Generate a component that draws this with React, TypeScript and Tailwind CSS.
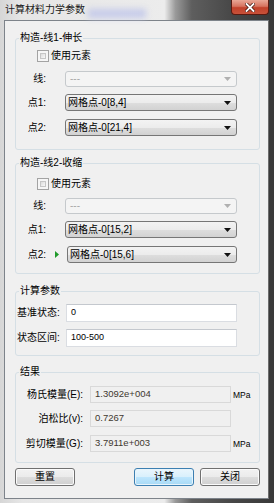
import React from 'react';

const font = "[font-family:'Liberation_Sans','Noto_Sans_CJK_SC',sans-serif]";

const Arrow = ({ disabled }: { disabled?: boolean }) => (
    <svg width="7" height="4" viewBox="0 0 7 4" className="shrink-0">
        <path d="M0 0H7L3.5 4Z" fill={disabled ? '#b0b0b0' : '#111'} />
    </svg>
);

const Combo = ({ value, disabled, width }: { value: string; disabled?: boolean; width: string }) => {
    if (disabled) {
        return (
            <div className={`${width} h-[16px] flex items-center pl-[4px] pr-[5px] rounded-[3px] border border-[#c5c9cc] bg-[#f4f4f4] text-[#a8a8a8]`}>
                <span className="flex-1 leading-[12px]">---</span>
                <Arrow disabled />
            </div>
        );
    }
    return (
        <div className={`${width} h-[17px] flex items-center pl-[2px] pr-[5px] rounded-[3px] border border-[#767676] bg-[linear-gradient(180deg,#f3f3f3_0%,#ececec_50%,#dedede_51%,#d2d2d2_100%)] text-black`}>
            <span className="flex-1 leading-[12px] whitespace-nowrap">{value}</span>
            <Arrow />
        </div>
    );
};

const CheckRow = () => (
    <div className="flex items-center h-[13px] pl-[21px]">
        <div className="w-[12px] h-[12px] border border-[#a3a3a3] bg-[#f6f6f6] p-[2px]">
            <div className="w-full h-full border border-[#c6c6c6] bg-[linear-gradient(135deg,#dcdcdc_0%,#f8f8f8_100%)]" />
        </div>
        <span className="ml-[2px] leading-[12px]">使用元素</span>
    </div>
);

const Group = ({ title, className, children }: { title: string; className: string; children: React.ReactNode }) => (
    <div className={`relative border border-[#d5dfe5] rounded-[3px] ${className}`}>
        <span className="absolute -top-[7px] left-[3px] px-[1px] bg-[#f0f0f0] leading-[12px]">{title}</span>
        {children}
    </div>
);

const Button = ({ label, primary }: { label: string; primary?: boolean }) => (
    <div
        className={`h-[18px] flex items-center justify-center rounded-[3px] border ${
            primary
                ? 'w-[60px] border-[#3c7fb1] bg-[linear-gradient(180deg,#eaf6fd_0%,#d9f0fc_50%,#bee6fd_51%,#a7d9f5_100%)] shadow-[inset_0_0_0_1px_#e8f4fb]'
                : 'w-[60px] border-[#707070] bg-[linear-gradient(180deg,#f2f2f2_0%,#ebebeb_50%,#dddddd_51%,#cfcfcf_100%)] shadow-[inset_0_0_0_1px_#fbfbfb]'
        }`}
    >
        <span className="leading-[12px]">{label}</span>
    </div>
);

const ResultRow = ({ label, value, unit }: { label: string; value: string; unit?: string }) => (
    <div className="flex items-center">
        <span className="w-[67px] text-right leading-[12px] whitespace-nowrap">{label}</span>
        <div className="ml-[7px] w-[141px] h-[17px] flex items-center pl-[4px] border border-[#d9d9d9] bg-[#f0f0f0] text-[9.5px] text-[#3f382f]">
            {value}
        </div>
        {unit && <span className="ml-[2px] text-[8.5px] leading-[12px]">{unit}</span>}
    </div>
);

const App = () => {
    return (
        <div className={`relative w-[274px] h-[503px] overflow-hidden flex flex-col text-[10px] text-black ${font} bg-[linear-gradient(90deg,#d6d6d6_0%,#e6e6e6_8%,#ececec_60%,#9a9a9a_64%,#5e5e5e_70%,#474747_85%,#393939_100%)]`}>
            {/* Title bar */}
            <div className="relative h-[20px] flex items-start shrink-0">
                <div className="absolute left-[88px] top-[9px] w-[58px] h-[9px] bg-[#c6cbea] blur-[3px]" />
                <span className="relative pl-[5px] pt-[4px] leading-[12px] text-[#1a1a1a]">计算材料力学参数</span>
                <div className="relative ml-auto mr-[5px] w-[38px] h-[15px] flex items-center justify-center rounded-b-[4px] border border-t-0 border-[#5a1a10] bg-[linear-gradient(180deg,#e9a796_0%,#d7735f_45%,#c2412a_55%,#c8523a_100%)]">
                    <svg width="10" height="9" viewBox="0 0 10 9">
                        <path d="M1.5 1L8.5 8M8.5 1L1.5 8" stroke="#4a1a12" strokeWidth="3.4" strokeLinecap="square" />
                        <path d="M1.5 1L8.5 8M8.5 1L1.5 8" stroke="#ffffff" strokeWidth="1.8" strokeLinecap="square" />
                    </svg>
                </div>
            </div>

            {/* Client */}
            <div className="ml-[4px] w-[265px] h-[479px] border border-[#7d838a] border-r-[#6d6d6d] bg-[#f0f0f0] pl-[10px] pr-[8px] flex flex-col">
                <Group title="构造-线1-伸长" className="mt-[17px] pt-[10px] pb-[13px]">
                    <CheckRow />
                    <div className="flex items-center mt-[9px]">
                        <span className="w-[30px] text-right leading-[12px]">线:</span>
                        <div className="ml-[19px]"><Combo value="---" disabled width="w-[172px]" /></div>
                    </div>
                    <div className="flex items-center mt-[7px]">
                        <span className="w-[30px] text-right leading-[12px]">点1:</span>
                        <div className="ml-[19px]"><Combo value="网格点-0[8,4]" width="w-[172px]" /></div>
                    </div>
                    <div className="flex items-center mt-[8px]">
                        <span className="w-[30px] text-right leading-[12px]">点2:</span>
                        <div className="ml-[19px]"><Combo value="网格点-0[21,4]" width="w-[172px]" /></div>
                    </div>
                </Group>

                <Group title="构造-线2-收缩" className="mt-[13px] pt-[13px] pb-[10px]">
                    <CheckRow />
                    <div className="flex items-center mt-[8px]">
                        <span className="w-[30px] text-right leading-[12px]">线:</span>
                        <div className="ml-[19px]"><Combo value="---" disabled width="w-[172px]" /></div>
                    </div>
                    <div className="flex items-center mt-[7px]">
                        <span className="w-[30px] text-right leading-[12px]">点1:</span>
                        <div className="ml-[19px]"><Combo value="网格点-0[15,2]" width="w-[172px]" /></div>
                    </div>
                    <div className="flex items-center mt-[8px]">
                        <span className="w-[30px] text-right leading-[12px]">点2:</span>
                        <svg width="4" height="7" viewBox="0 0 4 7" className="ml-[9px]">
                            <path d="M0 0L4 3.5L0 7Z" fill="#1f9a2a" />
                        </svg>
                        <div className="ml-[8px]"><Combo value="网格点-0[15,6]" width="w-[170px]" /></div>
                    </div>
                </Group>

                <Group title="计算参数" className="mt-[17px] pt-[12px] pb-[8px]">
                    <div className="flex items-center">
                        <span className="w-[50px] pl-[1px] leading-[12px] whitespace-nowrap">基准状态:</span>
                        <div className="w-[171px] h-[18px] flex items-center pl-[4px] bg-white border border-[#dadde2] border-t-[#c4c8ce] text-[9px]">0</div>
                    </div>
                    <div className="flex items-center mt-[7px]">
                        <span className="w-[50px] pl-[1px] leading-[12px] whitespace-nowrap">状态区间:</span>
                        <div className="w-[171px] h-[18px] flex items-center pl-[4px] bg-white border border-[#dadde2] border-t-[#c4c8ce] text-[9px]">100-500</div>
                    </div>
                </Group>

                <Group title="结果" className="mt-[16px] pt-[13px] pb-[10px]">
                    <ResultRow label="杨氏模量(E):" value="1.3092e+004" unit="MPa" />
                    <div className="mt-[7px]"><ResultRow label="泊松比(v):" value="0.7267" /></div>
                    <div className="mt-[8px]"><ResultRow label="剪切模量(G):" value="3.7911e+003" unit="MPa" /></div>
                </Group>

                <div className="flex items-center mt-[5px]">
                    <Button label="重置" />
                    <div className="ml-auto flex gap-[6px]">
                        <Button label="计算" primary />
                        <Button label="关闭" />
                    </div>
                </div>
            </div>
        </div>
    );
};

export default App;
